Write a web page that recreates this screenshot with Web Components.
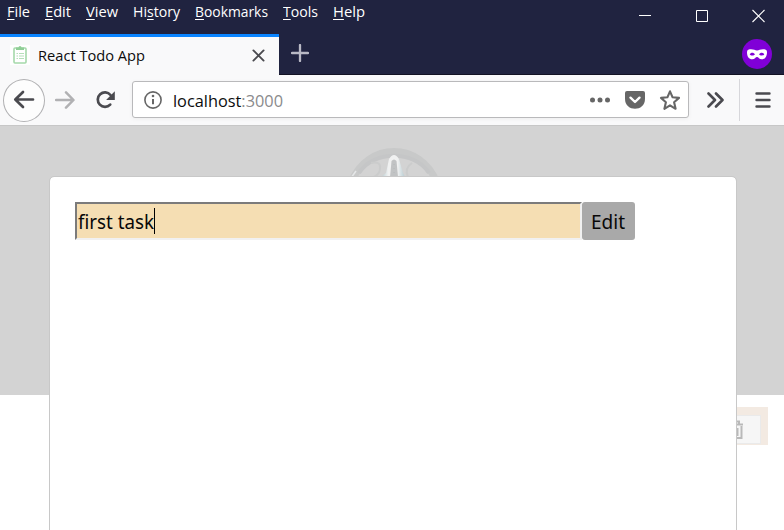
<!DOCTYPE html>
<html lang="en"><head><meta charset="utf-8"><title>React Todo App</title>
<style>html,body{margin:0;width:784px;height:530px;overflow:hidden;background:#fff}</style></head>
<body><browser-window></browser-window>
<script>
const define=(name,css,html,init)=>customElements.define(name,class extends HTMLElement{
  constructor(){super();const t=document.createElement('template');
    t.innerHTML=`<style>*{box-sizing:border-box}svg{display:block;flex:none}${css}</style>${html}`;
    this.attachShadow({mode:'open'}).append(t.content.cloneNode(true));}
  connectedCallback(){if(init)init(this)}
});
/* A single line of text condensed to the width given by its "w" attribute. */
define('fit-text',`:host{display:block;white-space:pre;flex:none}span{display:inline-block;transform-origin:0 50%}`,`<span><slot></slot></span>`,el=>{
  const w=+el.getAttribute('w');el.style.width=w+'px';
  const s=el.shadowRoot.querySelector('span');s.style.transform=`scaleX(${w/s.getBoundingClientRect().width})`;
});
define('menu-bar',`:host{display:flex;justify-content:space-between;height:34px;color:#fff;padding-left:7px}
nav{display:flex;gap:15px;font:15px/20px "Open Sans","Noto Sans",sans-serif;padding-top:1px}
u{text-decoration:underline;text-decoration-thickness:1px;text-underline-offset:2px;text-decoration-skip-ink:none}
.win{display:flex;padding:9px 19px 0 0;gap:44px}.x{margin-left:-1px}`,
`<nav><fit-text w="23"><u>F</u>ile</fit-text><fit-text w="26"><u>E</u>dit</fit-text><fit-text w="32"><u>V</u>iew</fit-text><fit-text w="47">Hi<u>s</u>tory</fit-text><fit-text w="73"><u>B</u>ookmarks</fit-text><fit-text w="35"><u>T</u>ools</fit-text><fit-text w="32"><u>H</u>elp</fit-text></nav>
<div class="win"><svg width="13" height="14"><path d="M0 6.5h12" stroke="#fff"/></svg><svg width="13" height="14"><path d="M.5 1.5h11v11H.5z" fill="none" stroke="#fff"/></svg><svg class="x" width="13" height="14"><path d="M.5 1l12 12M12.5 1L.5 13" stroke="#fff" stroke-width="1.1"/></svg></div>`);
define('tab-strip',`:host{display:flex;height:41px}
.tab{width:279px;background:#f9f9fa;border-top:3px solid #0a84ff;display:flex;align-items:center;padding:0 14px 2px 10px;color:#0c0c0d;font:15px/20px "Open Sans","Noto Sans",sans-serif}
fit-text{margin-left:8px}.close{margin-left:auto}
.rest{flex:1;display:flex;justify-content:space-between;border-bottom:1px solid #121223;padding:10px 12px 0 12px}.mask{margin-top:-5px}`,
`<div class="tab"><svg width="20" height="20"><path d="M0 0h20v20H0z" fill="#fff"/><rect x="4" y="3" width="12" height="15" rx="1" fill="none" stroke="#a5d9aa" stroke-width="1.6"/><path d="M6 5V2.500h2.500a1.500 1.500 0 0 1 3 0H14V5z" fill="#8fce96"/><path d="M6.500 8.500h1.500M9 8.500h5M6.500 11h1.500M9 11h5M6.500 13.500h1.500M9 13.500h5" stroke="#b5dfb9" stroke-width="1.2"/></svg><fit-text w="107">React Todo App</fit-text><svg class="close" width="13" height="13"><path d="M1.400 1.400l10.200 10.200M11.600 1.400L1.400 11.600" stroke="#4a4a4f" stroke-width="1.900" stroke-linecap="round"/></svg></div>
<div class="rest"><svg width="18" height="18"><path d="M9 1v16M1 9h16" stroke="#b9b9c5" stroke-width="2.300" stroke-linecap="round"/></svg><svg class="mask" width="30" height="30"><circle cx="15" cy="15" r="15" fill="#8000d7"/><path fill-rule="evenodd" fill="#fff" d="M5 13C5 10.800 7 10.300 9 10.300c3 0 4 1.200 6 1.200s3-1.200 6-1.200c2 0 4 .5 4 2.700 0 4.800-2 7.300-5.300 7.300-2.400 0-3.200-2.300-4.700-2.300s-2.300 2.300-4.700 2.300C7 20.300 5 17.800 5 13zM7.700 15.200c.7 1.600 4.200 1.800 5.300 0-1.200-2.100-4.300-2.100-5.300 0zm9.300 0c1.100 1.800 4.600 1.600 5.300 0-1-2.100-4.100-2.100-5.300 0z"/></svg></div>`);
define('address-bar',`:host{display:flex;width:557px;height:37px;margin-left:16px;align-self:flex-start;margin-top:6px;background:#fff;border:1px solid #b9b9bb;border-radius:3px;box-shadow:0 1px 4px rgba(0,0,0,.05);align-items:center;padding:0 7px 0 10px;font:17px/24px "Open Sans","Noto Sans",sans-serif;color:#0c0c0d}
fit-text{margin:3px 0 0 10px}fit-text i{font-style:normal;color:#8a8a8c}.actions{display:flex;align-items:center;gap:14px;margin-left:auto}`,
`<svg width="20" height="20"><circle cx="10" cy="10" r="8.100" fill="none" stroke="#666" stroke-width="1.6"/><path d="M10 9v5.300" stroke="#666" stroke-width="2"/><circle cx="10" cy="6" r="1.3" fill="#666"/></svg><fit-text w="110">localhost<i>:3000</i></fit-text>
<div class="actions"><svg width="22" height="20" fill="#666"><circle cx="3.500" cy="10" r="2.500"/><circle cx="11" cy="10" r="2.500"/><circle cx="18.500" cy="10" r="2.500"/></svg><svg width="20" height="20"><path fill="#666" d="M2 1h16q2 0 2 2v6c0 13-20 13-20 0V3q0-2 2-2z"/><path d="M5.500 7.700L10 12l4.500-4.300" fill="none" stroke="#fff" stroke-width="2.400" stroke-linecap="round" stroke-linejoin="round"/></svg><svg width="22" height="22"><path d="M11 2.300l2.600 6 6.400.600-4.900 4.300 1.500 6.600L11 16.300l-5.600 3.500 1.500-6.600L2 8.900l6.400-.600z" fill="none" stroke="#666" stroke-width="2.100" stroke-linejoin="round"/></svg></div>`);
define('nav-toolbar',`:host{display:flex;height:50px;background:#f9f9fa;align-items:center;padding:0 13px 0 3px}
.back{width:42px;height:43px;border:1px solid #b1b1b3;border-radius:50%;background:#fdfdfd;display:flex;align-items:center;justify-content:center}.fwd{margin-left:10px}.reload{margin-left:20px}.more{margin-left:18px}.sep{height:42px;width:1px;background:#d7d7db;margin:0 15px 0 15px}`,
`<div class="back"><svg width="22" height="20"><path d="M20 9.500H2.500M10 2L2.300 9.500 10 17" fill="none" stroke="#4a4a4f" stroke-width="2.700" stroke-linecap="round" stroke-linejoin="round"/></svg></div>
<svg class="fwd" width="20" height="20"><path d="M1 10h17M11 2.300L18.500 10 11 17.700" fill="none" stroke="#b1b1b3" stroke-width="2.500" stroke-linecap="round" stroke-linejoin="round"/></svg>
<svg class="reload" width="21" height="20"><path d="M15.200 14.600A7.200 7.200 0 1 1 15.500 5" fill="none" stroke="#4a4a4f" stroke-width="2.700" stroke-linecap="round"/><path d="M19.800 1.300v8.700h-8.700z" fill="#4a4a4f"/></svg>
<address-bar></address-bar>
<svg class="more" width="17" height="18"><path d="M1.500 2.500L8 9l-6.500 6.500M9 2.500L15.500 9 9 15.500" fill="none" stroke="#4a4a4f" stroke-width="2.600" stroke-linecap="round" stroke-linejoin="round"/></svg><div class="sep"></div><svg width="16" height="18"><path d="M1.500 2.500h13M1.500 9h13M1.500 15.500h13" stroke="#4a4a4f" stroke-width="2.400" stroke-linecap="round"/></svg>`);
define('edit-dialog',`:host{position:absolute;left:49px;top:51px;width:688px;height:370px;background:#fff;background-clip:padding-box;border:1px solid #c8c8c8;border-radius:5px;padding:25px;display:flex;align-items:flex-start;font:20.500px/24px "Noto Sans","Open Sans",sans-serif;color:#080808}
.field{width:507px;height:38px;background:#f5deb3;border:2px solid;border-color:#7b7b7b #f1f1f1 #f1f1f1 #7b7b7b;padding:0 1px;display:flex;align-items:center}
.caret{width:1px;height:26px;background:#000}.btn{width:53px;height:38px;background:#a9a9a9;border-radius:3px;display:flex;padding-left:9px;align-items:center}`,
`<div class="field"><fit-text w="76">first task</fit-text><span class="caret"></span></div><div class="btn"><fit-text w="34">Edit</fit-text></div>`);
define('page-view',`:host{display:block;position:relative;height:405px;overflow:hidden;background:#fff}
.hero{height:270px;background:#d3d3d3;border-top:1px solid #c7c7c7;padding:20px 0 0 345px}
.row{margin:12px 16px 0 50px;height:38px;background:#f3eae2;display:flex;justify-content:flex-end;padding:8px 7px 1px}
.del{width:42px;height:29px;background:#f6f6f6;border:1px solid #eaeaea;padding:4px 0 0 11px}`,
`<div class="hero"><svg width="100" height="40"><defs><linearGradient id="g"><stop offset="0" stop-color="#b5cbd1"/><stop offset=".3" stop-color="#f0f1f1"/><stop offset=".7" stop-color="#f0f1f1"/><stop offset="1" stop-color="#b5cbd1"/></linearGradient></defs><path d="M6 37C22-5 76-5 92 37" fill="none" stroke="#c8c9c9" stroke-width="7"/><path d="M14 27C29 4 69 4 84 27" fill="none" stroke="#c5c6c7" stroke-width="4"/><path d="M6 32l5-7" stroke="#e5e7e8" stroke-width="1.500"/><path d="M26 17q10-2 9 5 0 6-6 9M63 31q-4-9 4-14" fill="none" stroke="#cbcccc" stroke-width="2"/><path d="M36 31l5-4 3-14q5-8 10 0l4 14 2 4z" fill="url(#g)"/><path d="M45 31l1.500-16q2.500-3 5 0l1.500 16z" fill="#c1c3c4"/><path d="M49 18v12" stroke="#b4b8ba" stroke-dasharray="1 3"/></svg></div>
<div class="row"><div class="del"><svg width="13" height="20"><path d="M1 4.500h11M5 4V1.500h3V4M2.500 6v12h8V6M6.500 8v8" fill="none" stroke="#b9b9b9" stroke-width="2"/></svg></div></div><edit-dialog></edit-dialog>`);
define('browser-window',`:host{display:flex;flex-direction:column;width:784px;height:530px;background:#202340}`,`<menu-bar></menu-bar><tab-strip></tab-strip><nav-toolbar></nav-toolbar><page-view></page-view>`);
</script></body></html>
